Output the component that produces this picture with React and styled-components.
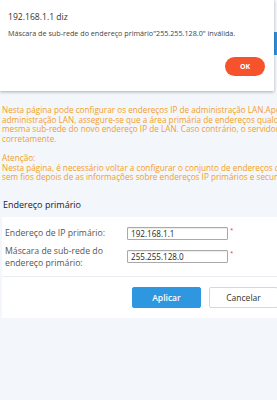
import styled, { createGlobalStyle } from "styled-components";

const GlobalStyle = createGlobalStyle`
  html, body {
    margin: 0;
    padding: 0;
    background: #f3f6fb;
    overflow: hidden;
  }
  body {
    font-family: "Open Sans", "Liberation Sans", Arial, sans-serif;
  }
`;

const Page = styled.div`
  position: relative;
  width: 440px;
  height: 400px;
`;

const TopArea = styled.div`
  display: flex;
  height: 105px;
`;

const TopSpacer = styled.div`
  width: 274px;
`;

const BlueTab = styled.div`
  width: 20px;
  height: 23px;
  margin-top: 32px;
  background: #2f8fdc;
`;

const Notice = styled.div`
  padding-left: 2px;
  color: #f3a027;
  font-size: 8.2px;
  line-height: 9.6px;
`;

const Line = styled.div`
  white-space: nowrap;
  min-height: 9.6px;
`;

const SectionTitle = styled.div`
  margin-top: 17px;
  padding-left: 3px;
  color: #222;
  font-size: 9px;
  line-height: 12px;
  height: 18px;
`;

const Panel = styled.div`
  margin-left: 2px;
  background: #fff;
  padding: 10px 0 10px 3px;
`;

const FormRow = styled.div`
  display: grid;
  grid-template-columns: 122px auto;
  align-items: center;
  margin-bottom: ${(p) => p.$gap || 0}px;
`;

const Label = styled.div`
  color: #555;
  font-size: 8.7px;
  line-height: 12px;
`;

const InputWrap = styled.div`
  display: flex;
  align-items: flex-start;
`;

const Input = styled.div`
  width: 96px;
  height: 11px;
  border: 1px solid #a9a9a9;
  border-radius: 1px;
  padding-left: 3px;
  color: #1e1e1e;
  font-size: 8.1px;
  line-height: 11px;
  box-shadow: inset 0 1px 1px rgba(0, 0, 0, 0.08);
`;

const Req = styled.span`
  margin-left: 2px;
  color: #e33;
  font-size: 6px;
  line-height: 6px;
`;

const Divider = styled.div`
  height: 1px;
  background: #eaedf1;
  margin: 7px 0 10px -3px;
`;

const ButtonRow = styled.div`
  display: flex;
  gap: 8px;
  padding-left: 127px;
`;

const Button = styled.button`
  width: 69px;
  height: 21px;
  border-radius: 2px;
  font-family: inherit;
  font-size: 8.5px;
  padding: 0;
  border: 1px solid ${(p) => (p.$primary ? "#2f97e0" : "#d4d7dc")};
  background: ${(p) => (p.$primary ? "#2f97e0" : "#fff")};
  color: ${(p) => (p.$primary ? "#fff" : "#333")};
  font-weight: ${(p) => (p.$primary ? 600 : 400)};
`;

const Dialog = styled.div`
  position: absolute;
  top: 0;
  left: 0;
  width: 274px;
  height: 91px;
  box-sizing: border-box;
  background: #fff;
  box-shadow: 0 1px 3px rgba(0, 0, 0, 0.3);
  padding: 11px 9px 0 8px;
  display: flex;
  flex-direction: column;
`;

const DialogTitle = styled.div`
  color: #333;
  font-size: 8.6px;
  line-height: 12px;
`;

const DialogText = styled.div`
  margin-top: 5px;
  color: #444;
  font-size: 7.2px;
  line-height: 10px;
  white-space: nowrap;
`;

const DialogActions = styled.div`
  display: flex;
  justify-content: flex-end;
  margin-top: 19px;
`;

const OkButton = styled.button`
  width: 40px;
  height: 19px;
  border: none;
  border-radius: 10px;
  background: #f6522b;
  color: #fff;
  font-family: inherit;
  font-size: 7px;
  font-weight: 700;
  padding: 0;
`;

export default function App() {
  return (
    <>
      <GlobalStyle />
      <Page>
        <TopArea>
          <TopSpacer />
          <BlueTab />
        </TopArea>
        <Notice>
          <Line>Nesta página pode configurar os endereços IP de administração LAN.Após alterar o endereço IP de</Line>
          <Line>administração LAN, assegure-se que a área primária de endereços qualquer servidor DHCP esteja na</Line>
          <Line>mesma sub-rede do novo endereço IP de LAN. Caso contrário, o servidor DHCP não funcionará</Line>
          <Line>corretamente.</Line>
          <Line />
          <Line>Atenção:</Line>
          <Line>Nesta página, é necessário voltar a configurar o conjunto de endereços do cliente da rede local</Line>
          <Line>sem fios depois de as informações sobre endereços IP primários e secundários serem alteradas.</Line>
        </Notice>
        <SectionTitle>Endereço primário</SectionTitle>
        <Panel>
          <FormRow $gap={5}>
            <Label>Endereço de IP primário:</Label>
            <InputWrap>
              <Input>192.168.1.1</Input>
              <Req>*</Req>
            </InputWrap>
          </FormRow>
          <FormRow>
            <Label>
              Máscara de sub-rede do
              <br />
              endereço primário:
            </Label>
            <InputWrap>
              <Input>255.255.128.0</Input>
              <Req>*</Req>
            </InputWrap>
          </FormRow>
          <Divider />
          <ButtonRow>
            <Button $primary>Aplicar</Button>
            <Button>Cancelar</Button>
          </ButtonRow>
        </Panel>
        <Dialog>
          <DialogTitle>192.168.1.1 diz</DialogTitle>
          <DialogText>
            Máscara de sub-rede do endereço primário"255.255.128.0" inválida.
          </DialogText>
          <DialogActions>
            <OkButton>OK</OkButton>
          </DialogActions>
        </Dialog>
      </Page>
    </>
  );
}
